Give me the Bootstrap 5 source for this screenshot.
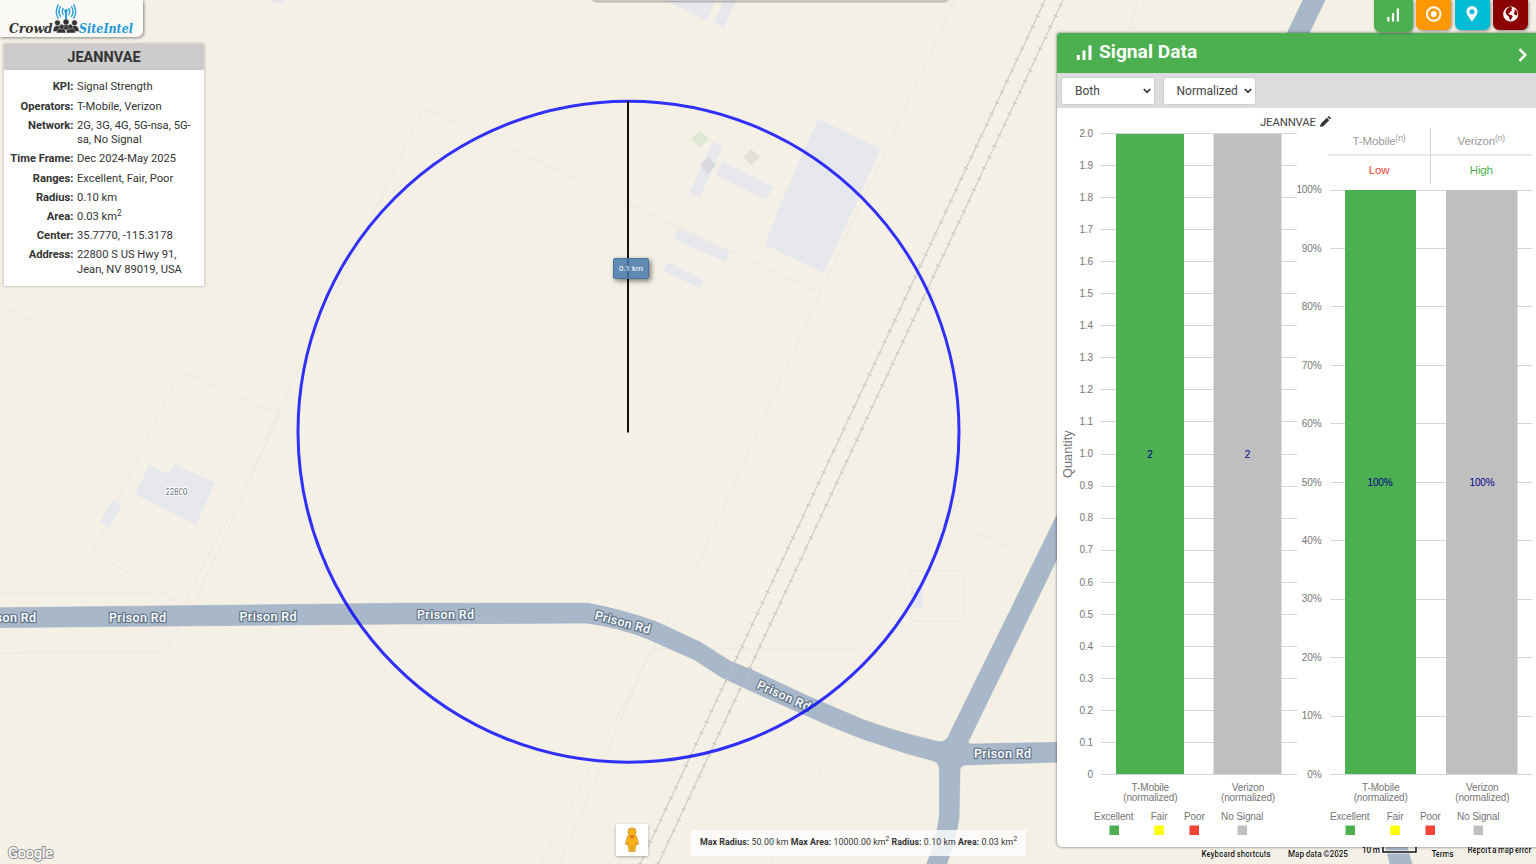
<!DOCTYPE html>
<html lang="en">
<head>
<meta charset="utf-8">
<title>Crowd SiteIntel</title>
<link href="https://cdn.jsdelivr.net/npm/bootstrap@5.3.0/dist/css/bootstrap.min.css" rel="stylesheet">
<script src="https://cdn.jsdelivr.net/npm/bootstrap@5.3.0/dist/js/bootstrap.bundle.min.js"></script>
<style>
body{width:1536px;height:864px;overflow:hidden;background:#f4f0e5;font-family:Roboto,sans-serif;color:#333}
.map-canvas{position:absolute;left:0;top:0;width:1536px;height:864px}
.map-canvas text{font-family:Roboto,sans-serif}
.over{position:absolute}
.brand-plate{left:0;top:0;width:143px;height:37px;background:#fbfaf7;border-radius:0 0 6px 0;box-shadow:1px 1px 3px rgba(0,0,0,.45)}
.info-box{left:4px;top:44px;width:200px;height:241.5px;background:#fff;box-shadow:0 0 3px rgba(0,0,0,.3);font-size:11.2px;line-height:14.4px}
.info-title{height:25.5px;background:#ccc;font-size:14.5px;line-height:27px}
.info-rows{display:grid;grid-template-columns:69.5px 1fr;column-gap:3.5px;row-gap:4.8px;padding-top:10.9px}
.info-rows dt{text-align:right;white-space:nowrap}
.info-rows dt,.info-rows dd{margin:0}
sup{font-size:75%;line-height:0;top:-.5em}
.top-slot{left:593px;top:-8px;width:355px;height:8.500px;box-shadow:0 0 3px rgba(0,0,0,.7);border-radius:4px;background:#ccc}
.radius-tip{left:613px;top:258px;width:36px;height:21px;background:rgba(70,120,170,.85);border:1px solid #48749f;border-radius:2px;box-shadow:2px 2px 5px rgba(0,0,0,.5);color:#fff;font-size:8px;line-height:19px}
.pegman{left:616px;top:824px;width:32px;height:32px;background:#fff;box-shadow:0 1px 3px rgba(0,0,0,.3);border-radius:1px}
.limits{left:691px;top:829.5px;width:335px;height:26px;background:rgba(255,255,255,.8);font-size:8.8px;line-height:25px;padding-left:9px;white-space:nowrap;letter-spacing:.06px}
.tab-strip{left:1374px;top:0;gap:3.4px}
.tab-key{width:35.2px;height:30px;border-radius:0 0 6px 6px;box-shadow:1px 1px 3px rgba(0,0,0,.4);padding-bottom:3px}
.tab-key.is-on{width:38.6px;height:32px}
.k-signal{background:#4caf50}.k-target{background:#ff9800}.k-place{background:#00bcd4}.k-world{background:#8b0000}
.side{left:1057px;top:33px;width:490px;height:814px;background:#fff;border-radius:3px 0 0 5px;box-shadow:0 0 3px rgba(0,0,0,.6)}
.side-head{height:39.500px;background:#4caf50;border-radius:3px 0 0 0;color:#fff;padding:0 8px 0 19px;font-size:19.2px;font-weight:700;line-height:38px;width:479px;gap:6px}
.side-head svg{margin-top:11.5px}
.side-head .go{margin-top:15px}
.side-tools{height:35.500px;background:#dcdcdc;padding:4.5px 0 0 4px;gap:8px}
.pick{width:93.500px;height:27.500px;border:1px solid #d0d0d0;border-radius:3px;background:#fff;font-size:12px;line-height:26px;padding:0 3px 0 13px;color:#444}
.chart{display:block;width:479px;height:739px}
.chart text{font-family:"Liberation Sans",Arial,sans-serif;font-size:10px;letter-spacing:-.12px;fill:#757575}
.chart .rate text{font-size:11.5px}
.chart .rate .who{fill:#999}.chart .rate .unit{fill:#999;font-size:8.5px}
.chart .rate .low{fill:#f44336}.chart .rate .high{fill:#4caf50}
.chart .site{font-family:Roboto,sans-serif;font-size:11.4px;letter-spacing:0;fill:#444}
.chart .axis{font-size:12.8px;letter-spacing:0}
.chart .count text{fill:#00008b}
</style>
</head>
<body>
<svg class="map-canvas" viewBox="0 0 1536 864">
  <g fill="none" stroke="#ebe7dc" stroke-width="1">
    <path d="M0 386L44 327L0 304M93 552L180 371L280 415L184 605M93 552L178 602M0 593H150M0 653L165 652L182 620M265 440L424 108L820 293M268 440L196 600M820 293L955 0M820 293L700 560L540 864M650 649H860L1000 440M864 700L790 820L770 864M945 519L1034 558M912 571H963V621H912ZM560 864L650 650M1130 30L1137 0M60 864L100 800"/>
  </g>
  <g fill="#e7e8ee">
    <path d="M818 119L881 149L824 273L765 245L782 200L784 197L801 157Z"/>
    <path d="M713 141L723 146L700 197L689 194ZM722 161L774 187L766 200L716 175ZM679 228L730 252L725 262L674 239ZM668 262L704 280L700 288L663 271ZM149 465L168 474L175 464L215 483L196 525L135 494ZM113 499L122 504L109 528L100 522ZM664 0H715L707 21ZM724 0H736L724 28L714 23ZM912 587H923V608H912ZM266 0H286L282 4Z"/>
  </g>
  <path fill="#e1e7d5" d="M700 131L709 139L700 148L691 139Z"/>
  <path fill="#d9dade" d="M708 157L716 165L708 174L700 165Z"/>
  <path fill="#e2e0d7" d="M751 149L760 157L751 165L743 157Z"/>
  <g fill="none" stroke="#cbc9c4">
    <path d="M640 864L1045 0M658 864L1063 0" stroke-width="1.1"/>
    <path d="M640 864L1045 0M658 864L1063 0" stroke-width="4.5" stroke-dasharray="1.2 10.8"/>
  </g>
  <g fill="#a9b8c9" stroke="#9eb0c3" stroke-width=".6">
    <path d="M0 607.7L400 603.3H588Q620 609 657 622L700 642L730 661L752 670L810 697L864 720Q900 733 938 741.5Q944 743 948 737L1056 517L1303 0H1325L1056 561L968 742Q968 744 972 744L1060 742.3V762L965 765Q960 766 960 770L959 818Q956 840 946 866H926Q937 838 939.5 815V770Q939 763 934 761L905 753L860 738L830 726L762 696L721 677L695 660L648 639Q618 627 586 623L400 624L0 627.5Z"/>
    <path d="M1384 840L1390 864H1412L1405 840Z"/>
  </g>
  <path d="M725 683L735 661M743 687L752 668" stroke="#b4bfca" fill="none"/>
  <g font-size="12.5" font-weight="500" fill="#fff" stroke="#66788c" stroke-width="2.6" stroke-linejoin="round" paint-order="stroke">
    <text x="-21" y="622" textLength="57">Prison Rd</text>
    <text x="109" y="621.5" textLength="57">Prison Rd</text>
    <text x="239.500" y="620.500" textLength="57">Prison Rd</text>
    <text x="417" y="619" textLength="57">Prison Rd</text>
    <text transform="translate(594 619) rotate(15)" textLength="57">Prison Rd</text>
    <text transform="translate(756 688) rotate(24)" textLength="57">Prison Rd</text>
    <text x="974" y="758" textLength="57">Prison Rd</text>
  </g>
  <text x="165.500" y="495" font-size="8.500" fill="#6b7280" stroke="#fff" stroke-width="2" paint-order="stroke" textLength="22">22800</text>
  <circle cx="628.500" cy="431.700" r="330.500" fill="none" stroke="#0000ff" stroke-opacity=".8" stroke-width="3"/>
  <path d="M628 101V432.500" stroke="#111" stroke-width="2"/>
  <text x="8" y="858" font-size="15" textLength="45" font-weight="500" fill="#fff" stroke="#8e8e8e" stroke-width="2" paint-order="stroke">Google</text>
  <g font-size="8.300" font-weight="500" fill="#111" stroke="#f8f6ef" stroke-width="2" paint-order="stroke">
    <text x="1201.500" y="857" textLength="69">Keyboard shortcuts</text>
    <text x="1288" y="857" textLength="60">Map data ©2025</text>
    <text x="1362" y="853" textLength="18">10 m</text>
    <text x="1431.500" y="857" textLength="22">Terms</text>
    <text x="1467.500" y="853" textLength="64">Report a map error</text>
  </g>
  <path d="M1383 846V852H1416V846" fill="none" stroke="#fff" stroke-width="3"/>
  <path d="M1383 846V852H1416V846" fill="none" stroke="#111" stroke-width="1.500"/>
</svg>

<div class="over top-slot"></div>

<div class="over brand-plate">
  <svg width="143" height="37" viewBox="0 0 143 37" class="d-block">
    <g fill="none" stroke="#2b9fd9" stroke-width="1.400" stroke-linecap="round">
      <path d="M63.200 8.500Q61.200 11.500 63.200 14.500M68.800 8.500Q70.800 11.500 68.800 14.500M60.500 6.500Q57.500 11.500 60.500 16.500M71.500 6.500Q74.500 11.500 71.500 16.500M58.200 4.800Q54.500 11.500 58.200 18.200M73.800 4.800Q77.500 11.500 73.800 18.200"/>
      <path d="M66 12V20" stroke-width="2"/>
    </g>
    <circle cx="66" cy="11" r="1.900" fill="#2b9fd9"/>
    <g fill="#333" stroke="#fbfaf7" stroke-width=".4">
      <path d="M53 31.500Q53 25.500 57.500 25.500Q62 25.500 62 31.500ZM70 31.500Q70 25.500 74.500 25.500Q79 25.500 79 31.500Z"/>
      <circle cx="57.500" cy="22.800" r="2.800"/><circle cx="74.500" cy="22.800" r="2.800"/>
      <path d="M61 30Q61 24.500 66 24.500Q71 24.500 71 30Z"/>
      <circle cx="66" cy="22" r="3"/>
      <path d="M56.500 33Q57 28 61.500 28Q65.500 28 65.800 33ZM66.200 33Q66.500 28 70.500 28Q75 28 75.500 33Z"/>
      <circle cx="61.700" cy="26.800" r="2.500"/><circle cx="70.300" cy="26.800" r="2.500"/>
    </g>
    <g font-family="'DejaVu Serif',serif" font-style="italic" font-weight="700" font-size="13.700">
      <text x="9" y="33" fill="#333" textLength="43.500" lengthAdjust="spacingAndGlyphs">Crowd</text>
      <text x="79" y="33" fill="#2196d3" textLength="54" lengthAdjust="spacingAndGlyphs">SiteIntel</text>
    </g>
  </svg>
</div>

<section class="over info-box">
  <div class="info-title fw-bold text-center">JEANNVAE</div>
  <dl class="info-rows m-0">
    <dt>KPI:</dt><dd>Signal Strength</dd>
    <dt>Operators:</dt><dd>T-Mobile, Verizon</dd>
    <dt>Network:</dt><dd>2G, 3G, 4G, 5G-nsa, 5G-<br>sa, No Signal</dd>
    <dt>Time Frame:</dt><dd>Dec 2024-May 2025</dd>
    <dt>Ranges:</dt><dd>Excellent, Fair, Poor</dd>
    <dt>Radius:</dt><dd>0.10 km</dd>
    <dt>Area:</dt><dd>0.03 km<sup>2</sup></dd>
    <dt>Center:</dt><dd>35.7770, -115.3178</dd>
    <dt>Address:</dt><dd>22800 S US Hwy 91,<br>Jean, NV 89019, USA</dd>
  </dl>
</section>

<div class="over radius-tip text-center">0.1 km</div>

<div class="over pegman d-flex align-items-center justify-content-center">
  <svg width="16" height="26" viewBox="0 0 16 26">
    <g fill="#fbb116" stroke="#c98a1c" stroke-width=".7">
      <path d="M3.500 9Q8 7 12.500 9L14.500 17L12.500 18L11.800 16L11 24.500H8.600L8 19L7.400 24.500H5L4.200 16L3.500 18L1.500 17Z"/>
      <circle cx="8" cy="4.800" r="4"/>
    </g>
    <path d="M5 9L8 12L11 9Z" fill="#e8711c"/>
  </svg>
</div>

<div class="over limits"><b>Max Radius:</b> 50.00 km <b>Max Area:</b> 10000.00 km<sup>2</sup> <b>Radius:</b> 0.10 km <b>Area:</b> 0.03 km<sup>2</sup></div>

<aside class="over side">
  <div class="side-head d-flex">
    <svg width="17" height="16" viewBox="0 0 17 16" class="flex-shrink-0"><path d="M.8 10H3.800V15H.8ZM6.500 5.500H9.500V15H6.500ZM12.500 .3H15.500V15H12.500Z" fill="#fff"/></svg>
    <span>Signal Data</span>
    <svg width="10" height="14" viewBox="0 0 10 14" class="go ms-auto"><path d="M1.500 1.200L7.300 7L1.500 12.800" fill="none" stroke="#fff" stroke-width="2.500"/></svg>
  </div>
  <div class="side-tools d-flex">
    <div class="pick d-flex justify-content-between align-items-center"><span>Both</span><svg width="8" height="6" viewBox="0 0 8 6"><path d="M.8 1L4 4.300L7.200 1" fill="none" stroke="#333" stroke-width="1.700"/></svg></div>
    <div class="pick d-flex justify-content-between align-items-center"><span>Normalized</span><svg width="8" height="6" viewBox="0 0 8 6"><path d="M.8 1L4 4.300L7.200 1" fill="none" stroke="#333" stroke-width="1.700"/></svg></div>
  </div>
  <svg class="chart" viewBox="1057 108 479 739">
    <g id="grid"></g>
    <path d="M1116 134H1184V774H1116ZM1345 190H1416V774H1345Z" fill="#4caf50"/>
    <path d="M1213.500 134H1281.500V774H1213.500ZM1446 190H1517.500V774H1446Z" fill="#bfbfbf"/>
    <text x="1260" y="126" class="site" textLength="56">JEANNVAE</text>
    <path transform="translate(1320 116)" fill="#333" d="M0 11L.8 7.800L6.800 1.800L9.200 4.200L3.200 10.200ZM7.500 1.100L8.300 .3Q8.800 -.1 9.400 .4L10.700 1.700Q11.100 2.200 10.700 2.700L9.900 3.500Z"/>
    <path d="M1328.500 155H1532M1430.500 128V183.500" stroke="#d2d2d2"/>
    <g class="rate">
      <text x="1352.500" y="144.600" class="who">T-Mobile</text><text x="1395.500" y="140.500" class="unit">(n)</text>
      <text x="1457.500" y="144.600" class="who">Verizon</text><text x="1495" y="140.500" class="unit">(n)</text>
      <text x="1379" y="174" text-anchor="middle" class="low">Low</text>
      <text x="1481.300" y="174" text-anchor="middle" class="high">High</text>
    </g>
    <text transform="translate(1072 478) rotate(-90)" class="axis">Quantity</text>
    <g text-anchor="middle" class="count">
      <text x="1150" y="457.700">2</text><text x="1247.500" y="457.700">2</text>
      <text x="1380" y="485.700">100%</text><text x="1482" y="485.700">100%</text>
    </g>
    <g id="labels" text-anchor="middle"></g>
  </svg>
</aside>

<nav class="over tab-strip d-flex">
  <div class="tab-key is-on k-signal d-flex align-items-center justify-content-center"><svg width="14" height="14" viewBox="0 0 14 14"><path d="M1.200 9H3.400V13.500H1.200ZM5.900 5H8.100V13.500H5.900ZM10.800 .5H13V13.500H10.800Z" fill="#fff"/></svg></div>
  <div class="tab-key k-target d-flex align-items-center justify-content-center"><svg width="16" height="16" viewBox="0 0 16 16"><circle cx="7.700" cy="8" r="6.800" fill="none" stroke="#fff" stroke-width="1.900"/><circle cx="7.700" cy="8" r="2.900" fill="#fff"/></svg></div>
  <div class="tab-key k-place d-flex align-items-center justify-content-center"><svg width="12" height="16" viewBox="0 0 12 16"><path fill="#fff" fill-rule="evenodd" d="M6 0A5.600 5.600 0 0 1 11.600 5.600C11.600 8.500 8.500 12 6 15.800C3.500 12 .4 8.500 .4 5.600A5.600 5.600 0 0 1 6 0ZM6 3.200A2.500 2.500 0 1 0 6 8.200A2.500 2.500 0 1 0 6 3.200Z"/></svg></div>
  <div class="tab-key k-world d-flex align-items-center justify-content-center"><svg width="16" height="16" viewBox="0 0 16 16"><circle cx="7.700" cy="8" r="7.600" fill="#fff"/><path fill="#8b0000" d="M5.500 1.300L8.200 .9L9.300 2L8.300 3.200L9.200 4.200L7.500 5.500L6.700 7L5.200 7.300L6.300 8.500L8.800 9.300L9.800 10.600L8.600 12.200L7.800 14.500L6.500 13L6 10.700L3.800 9L2.500 6.700L2.800 4.200ZM11 3.500L13.200 4L14.500 7L14 9.500L12.200 9L10.700 7.200L12 5.500Z"/></svg></div>
</nav>

<script>
const line = (x1, x2, y) => `<path d="M${x1} ${y}H${x2}" stroke="#d6d6d6"/>`;
const tick = (x, y, t) => `<text x="${x}" y="${y + 3.5}" text-anchor="end">${t}</text>`;
let grid = '';
for (let i = 0; i <= 20; i++) {
  const y = 774.5 - i * 32.05;
  grid += line(1101, 1297, Math.floor(y) + .5) + tick(1093, y - .2, i ? (i / 10).toFixed(1) : '0');
}
for (let i = 0; i <= 10; i++) {
  const y = 774.5 - i * 58.45;
  grid += line(1330.5, 1532, Math.floor(y) + .5) + tick(1321.5, y - .2, i * 10 + '%');
}
document.getElementById('grid').innerHTML = grid;

let labels = '';
[[1150.3, 'T-Mobile'], [1248, 'Verizon'], [1380.7, 'T-Mobile'], [1482.3, 'Verizon']].forEach(([x, name]) => {
  labels += `<text x="${x}" y="791.2">${name}</text><text x="${x}" y="801">(normalized)</text>`;
});
[0, 236].forEach(dx => {
  [[1113.7, 'Excellent', '#4caf50', 1114.5], [1159, 'Fair', '#ffff00', 1159.3], [1194.3, 'Poor', '#f44336', 1194.5], [1242.2, 'No Signal', '#bfbfbf', 1242.5]].forEach(([x, name, c, bx]) => {
    labels += `<text x="${x + dx}" y="820.2">${name}</text><rect x="${bx + dx - 5}" y="825.5" width="9.5" height="9.5" fill="${c}"/>`;
  });
});
document.getElementById('labels').innerHTML = labels;
</script>
</body>
</html>
